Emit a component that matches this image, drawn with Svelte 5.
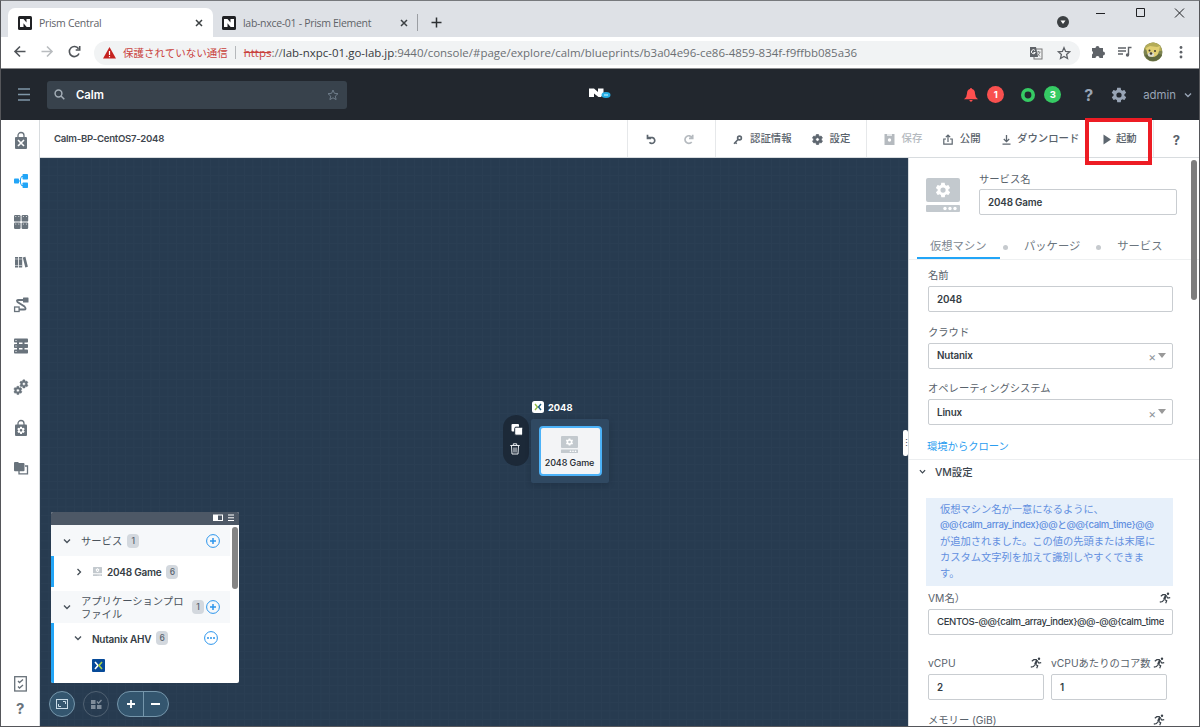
<script lang="ts">
  interface SideIcon {
    name: string;
    active?: boolean;
  }

  const sideIcons: SideIcon[] = [
    { name: 'market' },
    { name: 'blueprint', active: true },
    { name: 'apps' },
    { name: 'library' },
    { name: 'runbook' },
    { name: 'endpoint' },
    { name: 'gears' },
    { name: 'lock' },
    { name: 'projects' }
  ];

  const notice = [
    { text: '仮想マシン名が一意になるように、' },
    { text: '@@{calm_array_index}@@と@@{calm_time}@@', macro: true },
    { text: 'が追加されました。この値の先頭または末尾に' },
    { text: 'カスタム文字列を加えて識別しやすくできま' },
    { text: 'す。' }
  ];

  const vmName = 'CENTOS-@@{calm_array_index}@@-@@{calm_time}@@';

  const gear =
    'M19.4 13c0-.3.1-.6.1-1s0-.7-.1-1l2.1-1.6c.2-.2.3-.4.1-.7l-2-3.4c-.1-.2-.4-.3-.6-.2l-2.5 1a7 7 0 0 0-1.7-1l-.4-2.6c0-.3-.2-.5-.5-.5h-4c-.2 0-.5.2-.5.4L9 5.1a7 7 0 0 0-1.7 1l-2.5-1c-.2-.1-.5 0-.6.2l-2 3.4c-.1.3 0 .5.1.7L4.5 11a8 8 0 0 0 0 2l-2.1 1.6c-.2.2-.2.4-.1.7l2 3.4c.1.2.4.3.6.2l2.5-1a7 7 0 0 0 1.7 1l.4 2.6c0 .3.2.5.5.5h4c.2 0 .5-.2.5-.5l.4-2.6a7 7 0 0 0 1.7-1l2.5 1c.2.1.5 0 .6-.2l2-3.4c.1-.2 0-.5-.1-.7zM12 15.6a3.6 3.6 0 1 1 0-7.2 3.6 3.6 0 0 1 0 7.2z';
</script>

{#snippet favicon()}
  <svg class="favicon" width="14" height="14" viewBox="0 0 14 14">
    <rect width="14" height="14" rx="1.5" fill="#202124" />
    <path d="M2 3h3.5L8.500 6.500V3H12v8H8.700L5.500 7.200V11H2z" fill="#fff" />
  </svg>
{/snippet}

{#snippet close()}
  <svg width="8" height="8" viewBox="0 0 8 8">
    <path d="M1 1l6 6M7 1L1 7" stroke="#3c4043" stroke-width="1.5" />
  </svg>
{/snippet}

{#snippet serviceIcon(w: number)}
  <svg width={w} height={w} viewBox="0 0 34 34">
    <rect width="34" height="24" rx="2" fill="#c3c9ce" />
    <rect y="27" width="34" height="7" rx="1" fill="#c3c9ce" />
    <path transform="translate(8.4 3.4) scale(.72)" d={gear} fill="#fff" />
    <circle cx="19" cy="30.5" r="1.7" fill="#fff" />
    <circle cx="24" cy="30.5" r="1.7" fill="#fff" />
    <circle cx="29" cy="30.5" r="1.7" fill="#fff" />
  </svg>
{/snippet}

{#snippet runner()}
  <svg class="runner" width="12" height="12" viewBox="0 0 12 12" fill="none" stroke="#3a424a" stroke-width="1.2">
    <circle cx="9" cy="1.8" r="1.2" fill="#3a424a" stroke="none" />
    <path d="M1.800 4.200L3.800 2.700h3M7.800 4.500l1 1.500 2.400-.4M.8 10.200l2.700-.7L5 7.500M5.500 7.500l2.200 1.300-1 2.400" />
    <path d="M7.200 3L5.200 7.300" stroke-width="2.2" />
  </svg>
{/snippet}

{#snippet sideIcon(name: string)}
  <svg width="16" height="20" viewBox="0 0 16 20" fill="currentColor">
    {#if name === 'market'}
      <path d="M5 7V4.500a3 3 0 0 1 6 0V7" fill="none" stroke="currentColor" stroke-width="1.3" />
      <rect x="2" y="6" width="12" height="12" rx="1" />
      <path d="M5 9l6 6M11 9l-6 6" stroke="#fff" stroke-width="1.6" />
    {:else if name === 'blueprint'}
      <rect x="1" y="6.500" width="5" height="5" rx=".8" />
      <rect x="9.500" y="2" width="5.500" height="5.500" rx=".8" />
      <rect x="9.500" y="10.500" width="5.500" height="5.500" rx=".8" />
      <path d="M5 9h2.500M10 4.500H8.500L7.500 7v4l1 2.500H10" fill="none" stroke="currentColor" />
    {:else if name === 'apps'}
      {#each [[1, 2], [8.6, 2], [1, 9.4], [8.6, 9.4]] as [x, y]}
        <rect {x} {y} width="6.6" height="6.6" rx="1.2" />
        <circle cx={x + 1.8} cy={y + 1.6} r=".5" fill="#fff" />
        <circle cx={x + 4.8} cy={y + 1.6} r=".5" fill="#fff" />
      {/each}
    {:else if name === 'library'}
      <path d="M2 3h3.200v10.500H2zM6 3h3.200v10.500H6zM9.800 3.500l2.600-.7 2.500 10-2.600.7z" />
      <path d="M2 5h7M2 11.500h7" stroke="#fff" stroke-width=".5" />
    {:else if name === 'runbook'}
      <rect x="10" y="2.500" width="5.500" height="5" rx=".5" />
      <rect x="1.600" y="12" width="4.500" height="4.500" fill="none" stroke="currentColor" stroke-width="1.3" />
      <path d="M10 5H5.500Q3 5 4.500 7l7 4.500q2.500 3-.5 3H6" fill="none" stroke="currentColor" stroke-width="1.8" />
    {:else if name === 'endpoint'}
      <path d="M4 4h2v12H4zM9.500 4h2v12h-2z" />
      <rect x="1" y="2.500" width="14" height="4" rx=".8" />
      <rect x="1" y="8" width="14" height="4" rx=".8" />
      <rect x="1" y="13.500" width="14" height="4" rx=".8" />
      <path d="M2.500 4.500h1M2.500 10h1M2.500 15.500h1" stroke="#fff" />
    {:else if name === 'gears'}
      <path transform="translate(6 2) scale(.41)" d={gear} stroke="currentColor" stroke-width="1.2" />
      <path transform="translate(0 8.5) scale(.41)" d={gear} stroke="currentColor" stroke-width="1.2" />
    {:else if name === 'lock'}
      <path d="M5 8V5.500a3 3 0 0 1 6 0V8" fill="none" stroke="currentColor" stroke-width="1.3" />
      <rect x="2" y="6.500" width="12" height="11.500" rx="1" />
      <path transform="translate(3.6 7.9) scale(.37)" d={gear} fill="#fff" />
    {:else if name === 'projects'}
      <path d="M6 12v2.800h8.500V7H12" fill="none" stroke="currentColor" stroke-width="1.3" />
      <path d="M1 4q0-1 1-1h3l1 1h4.500q1 0 1 1v6.200q0 1-1 1H2q-1 0-1-1z" />
    {/if}
  </svg>
{/snippet}

{#snippet plus()}
  <svg width="14" height="14" viewBox="0 0 14 14" fill="none" stroke="#2c95ec">
    <circle cx="7" cy="7" r="6.4" />
    <path d="M7 4v6M4 7h6" stroke-width="1.5" />
  </svg>
{/snippet}

{#snippet chevron(size: number)}
  <svg class="chevron" width={size} height={size} viewBox="0 0 8 8">
    <path d="M1 2.500l3 3 3-3" fill="none" stroke="currentColor" stroke-width="1.4" />
  </svg>
{/snippet}

<div class="window">
  <div class="tabs">
    <div class="tab active">
      {@render favicon()}
      <span class="tab-title">Prism Central</span>
      {@render close()}
    </div>
    <div class="tab">
      {@render favicon()}
      <span class="tab-title">lab-nxce-01 - Prism Element</span>
      {@render close()}
    </div>
    <span class="tab-line"></span>
    <svg class="new-tab" width="11" height="11" viewBox="0 0 11 11">
      <path d="M5.500 .5v10M.5 5.500h10" stroke="#2d3033" stroke-width="1.5" />
    </svg>
    <svg class="controls" width="142" height="36" viewBox="0 0 142 36" fill="none" stroke="#202124">
      <circle cx="6" cy="21" r="6" fill="#3c4043" stroke="none" />
      <path d="M3.500 19.500h5L6 23z" fill="#fff" stroke="none" />
      <path d="M39 12.500h9M79.500 7.500h8v8h-8zM118 7.500l9 9M127 7.500l-9 9" />
    </svg>
  </div>

  <div class="address-row">
    <svg class="nav" width="70" height="16" viewBox="0 0 70 16" fill="none" stroke="#505459" stroke-width="1.6">
      <path d="M12.500 7.500H2M7 2.500l-5 5 5 5" />
      <path d="M28.500 7.500H39M34 2.500l5 5-5 5" stroke="#b9bcbf" />
      <path d="M65.500 4.700A5 5 0 1 0 66 9.500M66.700 2v4h-4" />
    </svg>
    <div class="omnibox">
      <svg width="13" height="12" viewBox="0 0 13 12">
        <path d="M6.500 0L13 11.500H0z" fill="#c5221f" />
        <path d="M6.500 4v4M6.500 9v1.300" stroke="#fff" stroke-width="1.2" />
      </svg>
      <span class="insecure">保護されていない通信</span>
      <span class="bar"></span>
      <span class="url"><s>https</s>://<b>lab-nxpc-01.go-lab.jp</b>:9440/console/#page/explore/calm/blueprints/b3a04e96-ce86-4859-834f-f9ffbb085a36</span>
      <svg class="omni-icons" width="42" height="14" viewBox="0 0 42 14">
        <rect x="5" y="3" width="8" height="10" fill="#f1f3f4" stroke="#777" />
        <path d="M1 1h6l2 10H1z" fill="#5f6368" />
        <path d="M6 4.500a2 2 0 1 0 .3 2H4.500" fill="none" stroke="#fff" />
        <path d="M7.500 6h4M9.500 5v1M11 6q-1 3-3 4M8.500 7.500l2.500 3" fill="none" stroke="#777" stroke-width=".8" />
        <path d="M35 1.700l1.600 3.700 4 .4-3 2.700.9 4-3.500-2.100-3.500 2.100.9-4-3-2.700 4-.4z" fill="none" stroke="#5f6368" stroke-width="1.3" />
      </svg>
    </div>
    <svg class="extensions" width="100" height="20" viewBox="0 0 100 20">
      <path d="M1 6h3.500a2 2 0 1 1 4 0H12v3.500a2 2 0 1 1 0 4V16H8.500a2 2 0 0 0-4 0H1v-3.500a2 2 0 0 0 0-3.500z" fill="#5f6368" />
      <path d="M27 6h8M27 9h8M27 12h5M37.500 13V5.500h3" fill="none" stroke="#5f6368" stroke-width="1.4" />
      <circle cx="36.500" cy="13" r="1.7" fill="#5f6368" />
      <circle cx="62" cy="10" r="9.5" fill="#7c8350" />
      <path d="M53 7q3-7 10-6.500 7 1 8 8l-4 1-10-1z" fill="#b4ac58" />
      <path d="M54 13q2 6 9 6 6-1 8-6l-7-3z" fill="#5f683f" />
      <path d="M55 6l4-2 7 1 3-1-1 5q-1 6-7 6-5-1-5-5z" fill="#e0cf72" />
      <ellipse cx="60" cy="12.500" rx="3.2" ry="2.300" fill="#d9d9cf" />
      <circle cx="58.500" cy="8.500" r="1" fill="#413d2d" />
      <circle cx="64" cy="9" r="1" fill="#413d2d" />
      <circle cx="60" cy="11.500" r="1.3" fill="#413d2d" />
      <circle cx="90" cy="5.500" r="1.4" fill="#5f6368" />
      <circle cx="90" cy="10.200" r="1.4" fill="#5f6368" />
      <circle cx="90" cy="15" r="1.4" fill="#5f6368" />
    </svg>
  </div>

  <header>
    <svg width="12" height="13" viewBox="0 0 12 13">
      <path d="M0 1h12M0 6.500h12M0 12h12" stroke="#7f97a8" stroke-width="1.3" />
    </svg>
    <div class="search">
      <svg width="11" height="11" viewBox="0 0 11 11" fill="none" stroke="#a3adb6" stroke-width="1.5">
        <circle cx="4.500" cy="4.500" r="3.400" />
        <path d="M7 7l3.300 3.300" />
      </svg>
      <span>Calm</span>
      <svg width="12" height="12" viewBox="0 0 12 12">
        <path d="M6 1l1.400 3.300 3.600.4-2.700 2.400.8 3.500L6 8.800l-3.100 1.800.8-3.500L1 4.700l3.600-.4z" fill="none" stroke="#6f7d8a" />
      </svg>
    </div>
    <svg class="logo" width="22" height="12" viewBox="0 0 22 12">
      <path d="M0 .5h5L9 4V.5h5.500v5L12 9H9.500L5 5.500V9H0z" fill="#fff" />
      <ellipse cx="17" cy="7" rx="4.500" ry="3" fill="#27aee5" />
      <path d="M15 7h4" stroke="#9fe0fa" stroke-width="1.5" />
    </svg>
    <div class="status">
      <svg width="14" height="14" viewBox="0 0 14 14" fill="#ff4f4f">
        <path d="M7 0q1 0 1 1 3 .7 3 4.500 0 3.500 3 5.700H0Q3 9 3 5.500 3 1.700 6 1q0-1 1-1zM5.300 12h3.400q-.4 1.800-1.700 1.800T5.300 12z" />
      </svg>
      <span class="badge red">1</span>
      <svg class="ring" width="14" height="14" viewBox="0 0 14 14">
        <circle cx="7" cy="7" r="5.200" fill="none" stroke="#36cb64" stroke-width="3.600" />
      </svg>
      <span class="badge green">3</span>
      <span class="help">?</span>
      <svg class="cog" width="16" height="16" viewBox="1 1 22 22" fill="#98a4b5"><path d={gear} /></svg>
      <span class="admin">admin</span>
      {@render chevron(8)}
    </div>
  </header>

  <div class="app">
    <nav>
      {#each sideIcons as icon}
        <div class="side" class:on={icon.active}>{@render sideIcon(icon.name)}</div>
      {/each}
      <div class="side-bottom">
        <svg width="13" height="16" viewBox="0 0 13 16" fill="none" stroke="#677078" stroke-width="1.3">
          <rect x=".7" y=".7" width="11.6" height="14.3" />
          <path d="M4 5l1.500 1.500L9 3.500M4 10.500L5.500 12 9 9" />
        </svg>
        <span>?</span>
      </div>
    </nav>

    <div class="main">
      <div class="toolbar">
        <div class="bp-name">Calm-BP-CentOS7-2048</div>
        <div class="group history">
          <svg width="11" height="11" viewBox="0 0 11 11" fill="none" stroke="#5d666f" stroke-width="1.7">
            <path d="M2 3.700h4.500a2.900 2.900 0 1 1-3 4.500M1.500 .8v3.500H5" />
          </svg>
          <svg width="11" height="11" viewBox="0 0 11 11" fill="none" stroke="#b5babf" stroke-width="1.7">
            <path d="M9 3.500A3.800 3.800 0 1 0 8.700 8M9.700 .8v3.500H6" />
          </svg>
        </div>
        <div class="group config">
          <span class="tool">
            <svg width="10" height="11" viewBox="0 0 10 11" fill="none" stroke="#5d666f" stroke-width="1.6">
              <circle cx="6.500" cy="4" r="1.900" />
              <path d="M5 5.500L1 9.700M2.200 8.200l1.500 1.500" />
            </svg>認証情報
          </span>
          <span class="tool">
            <svg width="11" height="11" viewBox="1 1 22 22" fill="#5d666f"><path d={gear} stroke="#5d666f" stroke-width="1.5" /></svg>設定
          </span>
        </div>
        <div class="group actions">
          <span class="tool off">
            <svg width="11" height="11" viewBox="0 0 11 11">
              <path d="M.5 0h10v11H.5z" fill="#b5babf" />
              <path d="M3 0h5v2H3z" fill="#e6e9eb" />
              <circle cx="5.500" cy="6" r="1.700" fill="#fff" />
            </svg>保存
          </span>
          <span class="tool">
            <svg width="10" height="11" viewBox="0 0 10 11" fill="none" stroke="#5d666f" stroke-width="1.2">
              <path d="M3 5H.8v5.200h8.400V5H7M5 8V1.200M2.800 3.200L5 1l2.200 2.200" />
            </svg>公開
          </span>
          <span class="tool">
            <svg width="9" height="11" viewBox="0 0 9 11" fill="none" stroke="#5d666f" stroke-width="1.3">
              <path d="M4.500 1v6.500M1.800 5l2.700 2.700L7.200 5M.5 10.200h8" />
            </svg>ダウンロード
          </span>
          <span class="tool launch">
            <svg width="8" height="11" viewBox="0 0 8 11"><path d="M.5 .5v10L8 5.500z" fill="#5d666f" /></svg>起動
          </span>
        </div>
        <div class="group help-cell">?</div>
      </div>

      <div class="workspace">
        <div class="canvas">
          <div class="node-title">
            <svg width="12" height="12" viewBox="0 0 12 12">
              <rect width="12" height="12" rx="2.5" fill="#fff" />
              <path d="M3 3l2.500 3L3 9" fill="none" stroke="#92bd42" stroke-width="1.4" />
              <path d="M9 3L6.500 6 9 9" fill="none" stroke="#1d6088" stroke-width="1.4" />
            </svg>
            <span>2048</span>
          </div>
          <div class="node-tools">
            <svg width="12" height="12" viewBox="0 0 12 12">
              <rect x=".5" width="7.5" height="7.500" rx="1" fill="#fff" />
              <rect x="3.700" y="3.200" width="8" height="8" rx="1.200" fill="#fff" stroke="#1c2938" />
            </svg>
            <svg class="trash" width="10" height="12" viewBox="0 0 10 12" fill="none" stroke="#e5e9ed">
              <path d="M.3 2.500h9.400M3.300 2.200V.8h3.400v1.400M1.500 3l.5 8h6l.5-8M4 4.500v5M6 4.500v5" />
            </svg>
          </div>
          <div class="node-group">
            <div class="node">
              {@render serviceIcon(17)}
              <span>2048 Game</span>
            </div>
          </div>

          <div class="tree">
            <div class="tree-bar">
              <svg width="21" height="8" viewBox="0 0 21 8" fill="none" stroke="#fff">
                <rect x=".5" y="1" width="9" height="5.500" />
                <path d="M1 1h4v5H1z" fill="#fff" stroke="none" />
                <path d="M15 1h6M15 3.800h6M15 6.500h6" />
              </svg>
            </div>
            <div class="tree-body">
              <div class="tree-rows">
                <div class="row head">
                  {@render chevron(8)}
                  <span class="cap">サービス</span>
                  <span class="count">1</span>
                  <span class="push">{@render plus()}</span>
                </div>
                <div class="row item game">
                  <svg width="6" height="8" viewBox="0 0 6 8"><path d="M1.500 1l3 3-3 3" fill="none" stroke="#444c54" stroke-width="1.3" /></svg>
                  {@render serviceIcon(9)}
                  <span class="name">2048 Game</span>
                  <span class="count">6</span>
                </div>
                <div class="row head profile">
                  {@render chevron(8)}
                  <span class="cap">アプリケーションプロ<br />ファイル</span>
                  <span class="count">1</span>
                  {@render plus()}
                </div>
                <div class="item ahv">
                  <div class="row">
                    {@render chevron(8)}
                    <span class="name">Nutanix AHV</span>
                    <span class="count">6</span>
                    <span class="push">
                      <svg width="14" height="14" viewBox="0 0 14 14" fill="#2c95ec">
                        <circle cx="7" cy="7" r="6.400" fill="none" stroke="#2c95ec" />
                        <path d="M3 6.200h2v1.600H3zM6 6.200h2v1.600H6zM9 6.200h2v1.600H9z" />
                      </svg>
                    </span>
                  </div>
                  <svg class="nx" width="13" height="13" viewBox="0 0 13 13">
                    <rect width="13" height="13" rx="1" fill="#064a99" />
                    <path d="M3 3l3 3.500L3 10" fill="none" stroke="#fff" stroke-width="1.6" />
                    <path d="M10 3L7 6.500l3 3.500" fill="none" stroke="#a8cf45" stroke-width="1.6" />
                  </svg>
                </div>
              </div>
              <div class="tree-thumb"></div>
            </div>
          </div>

          <div class="canvas-buttons">
            <span class="round">
              <svg width="12" height="10" viewBox="0 0 12 10" fill="none" stroke="#c9dbe7">
                <rect x=".5" y=".5" width="11" height="9" />
                <path d="M7 2.500h2.500V5M5 7.500H2.500V5" />
              </svg>
            </span>
            <span class="round ghost">
              <svg width="11" height="11" viewBox="0 0 11 11" fill="#7f8c9a">
                <path d="M0 1h4.500v4H0zM0 6h4.500v4H0zM6 6h4.500v4H6z" />
                <path d="M6 2.500L7.500 4.200 10.500 1" fill="none" stroke="#7f8c9a" stroke-width="1.3" />
              </svg>
            </span>
            <span class="zoom">
              <svg width="50" height="24" viewBox="0 0 50 24" stroke="#fff" stroke-width="1.8">
                <path d="M9 12h8M13 8v8M33 12h9" />
                <path d="M25.500 0v24" stroke="#7596ab" stroke-width="1" />
              </svg>
            </span>
          </div>
          <div class="splitter">⋮</div>
        </div>

        <aside>
          <div class="service">
            {@render serviceIcon(34)}
            <div class="service-name">
              <div class="label">サービス名</div>
              <div class="input">2048 Game</div>
            </div>
          </div>
          <div class="panel-tabs">
            <span class="current">仮想マシン</span>
            <i></i>
            <span>パッケージ</span>
            <i></i>
            <span>サービス</span>
          </div>
          <div class="form">
            <div class="label">名前</div>
            <div class="input">2048</div>
            <div class="label cloud">クラウド</div>
            <div class="input select">Nutanix <em>×</em><b></b></div>
            <div class="label os">オペレーティングシステム</div>
            <div class="input select">Linux <em>×</em><b></b></div>
            <div class="clone">環境からクローン</div>
          </div>
          <div class="section">{@render chevron(7)}<span>VM設定</span></div>
          <div class="notice">
            {#each notice as line}
              <div class:macro={line.macro}>{line.text}</div>
            {/each}
          </div>
          <div class="form vm">
            <div class="label">VM名）{@render runner()}</div>
            <div class="input long"><span class="macro">{vmName}</span></div>
            <div class="cpus">
              <div>
                <div class="label">vCPU{@render runner()}</div>
                <div class="input">2</div>
              </div>
              <div>
                <div class="label">vCPUあたりのコア数{@render runner()}</div>
                <div class="input">1</div>
              </div>
            </div>
            <div class="label memory">メモリー (GiB){@render runner()}</div>
          </div>
          <div class="panel-thumb"></div>
        </aside>
      </div>
    </div>
  </div>
  <div class="highlight"></div>
</div>

<style>
  :global(body) {
    overflow: hidden;
  }

  .window {
    position: relative;
    display: flex;
    flex-direction: column;
    box-sizing: border-box;
    width: 1200px;
    height: 727px;
    border: 1px solid #55565a;
    border-top-color: #77797d;
    overflow: hidden;
    background: #fff;
    color: #3b444d;
    font-family: Inter, "Noto Sans CJK JP", sans-serif;
    font-size: 10.4px;
  }

  .window * {
    box-sizing: border-box;
  }

  svg {
    display: block;
    flex: none;
  }

  .tabs {
    display: flex;
    align-items: flex-end;
    height: 36px;
    padding-left: 7px;
    background: #dee1e6;
    font-family: "Open Sans", "Noto Sans", sans-serif;
  }

  .tab {
    display: flex;
    align-items: center;
    width: 205px;
    height: 29px;
    padding: 0 10px;
    color: #5f6368;
  }

  .tab.active {
    background: #fff;
    border-radius: 7px 7px 0 0;
  }

  .tab-title {
    flex: 1;
    margin-left: 7px;
    font-size: 10.5px;
    letter-spacing: -0.3px;
    white-space: nowrap;
  }

  .tab + .tab {
    padding-left: 9px;
  }

  .tab-line {
    width: 1px;
    height: 17px;
    margin: 0 0 6px -1px;
    background: #9b9ea3;
  }

  .new-tab {
    margin: 0 0 9px 13px;
  }

  .controls {
    margin-left: auto;
  }

  .address-row {
    display: flex;
    align-items: center;
    height: 32px;
    padding-left: 12px;
    border-bottom: 1px solid #8c8d90;
  }

  .nav {
    margin: -1px 11px 0 0;
  }

  .omnibox {
    display: flex;
    align-items: center;
    width: 986px;
    height: 24px;
    padding: 0 9px;
    border-radius: 12px;
    background: #f1f3f4;
    font-family: "Open Sans", "Noto Sans CJK JP", sans-serif;
    color: #6b6f73;
  }

  .insecure {
    margin: -1px 0 0 7px;
    color: #c9423c;
    font-size: 10.5px;
  }

  .bar {
    width: 1px;
    height: 13px;
    margin: 0 8px 0 7px;
    background: #b5b8bb;
  }

  .url {
    flex: 1;
    margin-top: -1px;
    font-size: 11.48px;
    white-space: nowrap;
  }

  .url b {
    font-weight: 400;
    color: #36393d;
  }

  .url s {
    color: #c9423c;
  }

  .extensions {
    margin: -1px 0 0 11px;
  }

  header {
    display: flex;
    align-items: center;
    height: 51px;
    padding-left: 17px;
    background: #22272e;
  }

  .search {
    display: flex;
    align-items: center;
    width: 300px;
    height: 28px;
    margin-left: 17px;
    padding: 0 8px 0 7px;
    border-radius: 3px;
    background: #38424c;
    color: #fff;
    font-size: 11.3px;
    font-weight: 600;
  }

  .search span {
    flex: 1;
    margin: 1px 0 0 11px;
  }

  .logo {
    margin: -2px 0 0 242px;
  }

  .status {
    display: flex;
    align-items: center;
    margin-left: auto;
    padding-right: 7px;
    color: #98a4b5;
  }

  .badge {
    width: 17px;
    height: 17px;
    margin-left: 9px;
    border-radius: 50%;
    color: #fff;
    font-size: 9.5px;
    font-weight: 700;
    line-height: 17px;
    text-align: center;
  }

  .red {
    background: #f9504f;
  }

  .green {
    background: #36cb64;
  }

  .ring {
    margin-left: 17px;
  }

  .help {
    margin-left: 23px;
    font-size: 16px;
    font-weight: 700;
  }

  .cog {
    margin-left: 18px;
  }

  .admin {
    margin: 1px 8px 0 16px;
    font-size: 11.4px;
  }

  .app {
    display: flex;
    flex: 1;
    min-height: 0;
  }

  nav {
    display: flex;
    flex-direction: column;
    width: 39px;
    border-right: 1px solid #d8dcdf;
    background: #fff;
    color: #69737c;
  }

  .side {
    display: flex;
    align-items: center;
    height: 41px;
    padding-left: 12px;
  }

  .side.on {
    color: #22a5f7;
  }

  .side-bottom {
    margin-top: auto;
    padding: 0 0 9px 13px;
    font-size: 15px;
    font-weight: 700;
  }

  .side-bottom span {
    display: block;
    margin: 9px 0 0 2px;
    line-height: 16px;
  }

  .main {
    display: flex;
    flex-direction: column;
    flex: 1;
    min-width: 0;
  }

  .toolbar {
    display: flex;
    height: 38px;
    border-bottom: 1px solid #d8dcdf;
    line-height: 38px;
    color: #59626b;
  }

  .bp-name {
    flex: 1;
    padding-left: 14px;
    font-size: 9.6px;
    font-weight: 600;
    letter-spacing: -0.25px;
    color: #3f474f;
  }

  .group {
    display: flex;
    align-items: center;
    border-left: 1px solid #e6e8ea;
  }

  .history {
    width: 88px;
    padding: 1px 0 0 18px;
    gap: 26px;
  }

  .config {
    width: 151px;
    padding: 1px 0 0 17px;
    gap: 20px;
  }

  .actions {
    width: 287px;
    padding: 1px 0 0 17px;
    gap: 21px;
  }

  .help-cell {
    width: 46px;
    padding-top: 3px;
    justify-content: center;
    font-size: 13px;
    font-weight: 700;
  }

  .tool {
    display: flex;
    align-items: center;
    gap: 7px;
    font-weight: 500;
    white-space: nowrap;
  }

  .actions .tool {
    gap: 6.5px;
  }

  .tool.off {
    color: #b5babf;
  }

  .actions .tool.launch {
    gap: 4.5px;
    margin-left: 3px;
  }

  .workspace {
    display: flex;
    flex: 1;
    min-height: 0;
  }

  .canvas {
    position: relative;
    flex: 1;
    background-color: #273b50;
    background-image: linear-gradient(#2a3e53 1px, transparent 1px), linear-gradient(90deg, #2a3e53 1px, transparent 1px);
    background-size: 8.5px 8.5px;
  }

  .node-title {
    position: absolute;
    left: 492px;
    top: 243px;
    display: flex;
    align-items: center;
    gap: 4px;
    color: #fff;
    font-size: 9.3px;
    font-weight: 700;
    line-height: 11px;
  }

  .node-tools {
    position: absolute;
    left: 463px;
    top: 257px;
    display: flex;
    flex-direction: column;
    align-items: center;
    gap: 7px;
    width: 26px;
    height: 51px;
    padding: 9px 0 0 1px;
    border-radius: 13px;
    background: #1c2938;
  }

  .trash {
    margin-right: 3px;
  }

  .node-group {
    position: absolute;
    left: 491px;
    top: 261px;
    width: 78px;
    height: 64px;
    padding: 7px 7px 7px 8px;
    border-radius: 2px;
    background: #304962;
    box-shadow: 0 2px 6px rgba(10, 20, 30, 0.2);
  }

  .node {
    display: flex;
    flex-direction: column;
    align-items: center;
    gap: 4px;
    height: 50px;
    padding: 8px 2px 0 0;
    border: 2px solid #4cb2f8;
    border-radius: 4px;
    background: #f3f4f6;
    color: #22272e;
    font-size: 9px;
    font-weight: 500;
    letter-spacing: -0.1px;
    line-height: 12px;
    white-space: nowrap;
  }

  .tree {
    position: absolute;
    left: 11px;
    top: 354px;
    width: 188px;
    height: 171px;
    border-radius: 2px;
    overflow: hidden;
    background: #fff;
    color: #4a535c;
  }

  .tree-bar {
    height: 13px;
    padding: 2px 0 0 162px;
    background: #4d5866;
  }

  .tree-body {
    display: flex;
    gap: 2px;
  }

  .tree-rows {
    width: 179px;
  }

  .tree-thumb {
    width: 6px;
    height: 62px;
    margin-top: 2px;
    border-radius: 3px;
    background: #858585;
  }

  .row {
    display: flex;
    align-items: center;
  }

  .head {
    height: 31px;
    padding: 0 10px 0 12px;
    background: #f6f8fa;
  }

  .cap {
    margin: 1px 0 0 10px;
    font-size: 10.3px;
    line-height: 13px;
    white-space: nowrap;
  }

  .count {
    width: 12px;
    height: 14px;
    margin-left: 5px;
    border-radius: 4px;
    background: #d3d8de;
    color: #57616c;
    font-size: 8.5px;
    font-weight: 500;
    line-height: 14px;
    text-align: center;
    flex: none;
  }

  .push {
    margin-left: auto;
  }

  .item {
    border-left: 3px solid #22a5f7;
  }

  .game {
    height: 31px;
    margin-bottom: 4px;
    padding-left: 22px;
  }

  .game svg + :global(svg) {
    margin-left: 11px;
  }

  .name {
    margin: 1px 0 0 5px;
    font-size: 10px;
    font-weight: 600;
    letter-spacing: -0.25px;
    color: #343c44;
  }

  .profile {
    height: 32px;
  }

  .profile .count {
    margin: 0 2px 0 auto;
  }

  .ahv {
    height: 61px;
    padding: 1px 12px 0 20px;
  }

  .ahv .row {
    height: 28px;
  }

  .ahv .name {
    margin-left: 10px;
  }

  .nx {
    margin: 7px 0 0 18px;
  }

  .canvas-buttons {
    position: absolute;
    left: 9px;
    top: 533px;
    display: flex;
    align-items: center;
    gap: 8px;
  }

  .round {
    display: grid;
    place-items: center;
    width: 26px;
    height: 26px;
    border: 1px solid #7596ab;
    border-radius: 50%;
    background: #34566f;
  }

  .round.ghost {
    border-color: #506172;
    background: none;
  }

  .zoom {
    height: 26px;
    border: 1px solid #7596ab;
    border-radius: 13px;
    background: #34566f;
  }

  .splitter {
    position: absolute;
    right: 0;
    top: 272px;
    width: 5px;
    height: 26px;
    border-radius: 2px;
    background: #fff;
    font-size: 9px;
    line-height: 25px;
    text-align: center;
    text-indent: -1px;
  }

  aside {
    position: relative;
    width: 291px;
    height: 568px;
    overflow: hidden;
    border-left: 1px solid #d8dcdf;
    background: #fff;
  }

  .service {
    display: flex;
    padding: 14px 0 0 17px;
  }

  .service > :global(svg) {
    margin-top: 6px;
  }

  .service-name {
    width: 198px;
    margin-left: 19px;
  }

  .label {
    display: flex;
    align-items: center;
    height: 14px;
    color: #59626b;
    font-size: 10.3px;
    line-height: 14px;
    white-space: nowrap;
  }

  .input {
    display: flex;
    align-items: center;
    height: 26px;
    padding: 0 8px;
    border: 1px solid #c9cdd1;
    border-radius: 2px;
    color: #343c44;
    font-size: 9.8px;
    font-weight: 600;
    letter-spacing: -0.15px;
  }

  .service .input {
    margin-top: 3px;
  }

  .panel-tabs {
    display: flex;
    align-items: center;
    height: 34px;
    margin-top: 11px;
    padding-left: 8px;
    border-bottom: 1px solid #eef0f1;
    color: #6b757e;
    font-size: 11.3px;
  }

  .panel-tabs span {
    margin-top: 6px;
    line-height: 28px;
  }

  .panel-tabs .current {
    align-self: stretch;
    width: 83px;
    margin: 0;
    padding: 6px 0 0 13px;
    border-bottom: 2px solid #22a5f7;
    color: #7b858e;
  }

  .panel-tabs i {
    width: 5px;
    height: 5px;
    margin: 10px 16px 0 3px;
    border-radius: 50%;
    background: #c6cace;
  }

  .panel-tabs span + i + span + i {
    margin-left: 16px;
    margin-right: 16px;
  }

  .form {
    width: 264px;
    padding: 8px 0 0 19px;
  }

  .form .input {
    margin-top: 4px;
  }

  .form .cloud,
  .form .os {
    margin-top: 12.5px;
  }

  .select em {
    margin: 2px 0 0 auto;
    color: #8f969c;
    font-size: 12px;
    font-style: normal;
    font-weight: 400;
  }

  .select b {
    margin: 0 -2px 1px 2px;
    border: 4.5px solid transparent;
    border-top: 5px solid #999;
    border-bottom: 0;
  }

  .clone {
    margin: 14px 0 0 -1px;
    color: #2b9df0;
    font-size: 10.3px;
    line-height: 14px;
  }

  .section {
    display: flex;
    align-items: center;
    height: 24px;
    margin-top: 6px;
    padding-left: 10px;
    border-top: 1px solid #eceef0;
    font-weight: 500;
  }

  .section span {
    margin-left: 9px;
  }

  .notice {
    width: 247px;
    height: 88px;
    margin: 15px 0 0 17px;
    padding: 3px 0 0 14px;
    background: #e7f0fa;
    color: #628fe0;
    font-size: 10.25px;
    line-height: 16px;
    white-space: nowrap;
  }

  .macro {
    font-size: 9.6px;
    font-weight: 500;
    letter-spacing: -0.36px;
  }

  .vm {
    padding-top: 5px;
  }

  .label :global(.runner) {
    margin-left: auto;
    margin-right: 2px;
  }

  .long .macro {
    overflow: hidden;
    letter-spacing: -0.38px;
    line-height: 16px;
    white-space: nowrap;
  }

  .cpus {
    display: grid;
    grid-template-columns: 116px 116px;
    gap: 7px;
    margin-top: 21px;
  }

  .cpus + .memory {
    margin-top: 13px;
    padding-right: 6px;
  }

  .panel-thumb {
    position: absolute;
    right: 2px;
    top: 2px;
    width: 6px;
    height: 140px;
    border-radius: 3px;
    background: #7d7d7d;
  }

  .highlight {
    position: absolute;
    left: 1084px;
    top: 117px;
    width: 67px;
    height: 47px;
    border: 4px solid #ed1c24;
  }
</style>
